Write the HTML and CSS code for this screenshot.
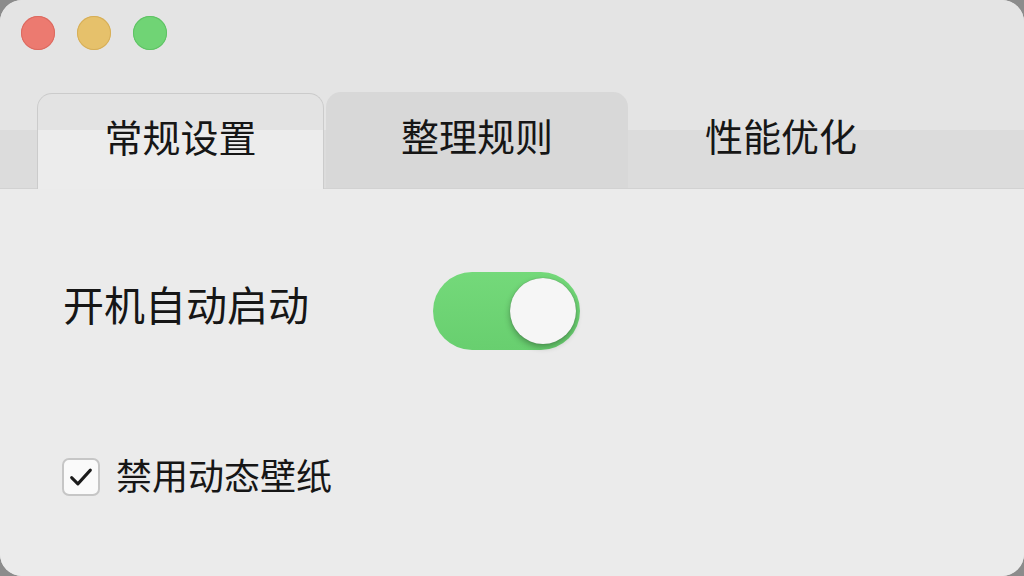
FILE: index.html
```html
<!DOCTYPE html>
<html lang="zh-CN">
<head>
  <meta charset="UTF-8" />
  <title>偏好设置</title>
  <link rel="stylesheet" href="styles.css">
</head>
<body>

<div class="window">
  <div class="titlebar">
    <span class="light red"></span>
    <span class="light yellow"></span>
    <span class="light green"></span>
  </div>

  <div class="tabbar" role="tablist">
    <div class="tab active" role="tab" aria-selected="true">常规设置</div>
    <div class="tab inactive" role="tab" aria-selected="false">整理规则</div>
    <div class="tab plain" role="tab" aria-selected="false">性能优化</div>
  </div>

  <div class="content">
    <div class="row">
      <span class="label">开机自动启动</span>
      <div class="switch" role="switch" aria-checked="true"><span class="knob"></span></div>
    </div>

    <label class="check-row">
      <span class="checkbox">
        <svg viewBox="0 0 24 24" width="30" height="30"><path d="M4.5 12.5l5 5L19.5 6.5" fill="none" stroke="#1a1a1a" stroke-width="2.4" stroke-linecap="round" stroke-linejoin="round"/></svg>
      </span>
      <span class="check-label">禁用动态壁纸</span>
    </label>
  </div>
</div>

</body>
</html>
```

FILE: styles.css
```css
body {
  margin: 0;
  background: #8c8c8c;
  font-family: "Noto Sans CJK SC", "Noto Sans", sans-serif;
  color: #161616;
}
.window {
  height: 576px;
  border-radius: 22px;
  overflow: hidden;
  background: #ebebeb;
  display: flex;
  flex-direction: column;
}
.titlebar {
  height: 93px;
  box-sizing: border-box;
  padding: 16px 0 0 21px;
  display: flex;
  gap: 22px;
  background: #e4e4e4;
}
.light {
  width: 34px;
  height: 34px;
  border-radius: 50%;
}
.red { background: #ec7a70; box-shadow: inset 0 0 0 1px #dc6a60; }
.yellow { background: #e6c16b; box-shadow: inset 0 0 0 1px #d6ae58; }
.green { background: #70d475; box-shadow: inset 0 0 0 1px #5fc265; }

.tabbar {
  height: 95px;
  display: flex;
  align-items: flex-end;
  padding-left: 37px;
  background: linear-gradient(#e4e4e4 0, #e4e4e4 37px, #dcdcdc 37px);
  border-bottom: 1px solid #d2d2d2;
}
.tab {
  height: 95px;
  box-sizing: border-box;
  display: flex;
  align-items: center;
  justify-content: center;
  font-size: 38px;
  padding-bottom: 12px;
}
.active {
  width: 287px;
  background: linear-gradient(#e3e3e3 0, #e3e3e3 36px, #ececec 36px);
  border: 1px solid #cbcbcb;
  border-bottom: none;
  border-radius: 15px 15px 0 0;
  margin-bottom: -1px;
  height: 96px;
}
.inactive {
  width: 302px;
  margin-left: 2px;
  background: #d8d8d8;
  border-radius: 15px 15px 0 0;
  height: 96px;
}
.plain {
  width: 306px;
}

.content {
  flex: 1;
  padding: 83px 0 0 63px;
  background: #ebebeb;
}
.row {
  display: flex;
  align-items: center;
}
.label {
  width: 370px;
  font-size: 41px;
  padding-bottom: 16px;
}
.switch {
  position: relative;
  width: 147px;
  height: 78px;
  border-radius: 39px;
  background: linear-gradient(#74d97a, #68cf6f);
}
.knob {
  position: absolute;
  top: 6px;
  right: 4px;
  width: 66px;
  height: 66px;
  border-radius: 50%;
  background: #f6f6f6;
  box-shadow: 0 3px 6px rgba(0, 0, 0, 0.3), 0 0 1px rgba(0, 0, 0, 0.3);
}
.check-row {
  display: flex;
  align-items: center;
  gap: 16px;
  margin-top: 98px;
  margin-left: -1px;
}
.checkbox {
  width: 38px;
  height: 38px;
  box-sizing: border-box;
  border: 2px solid #c6c6c6;
  border-radius: 7px;
  background: #fafafa;
  display: flex;
  align-items: center;
  justify-content: center;
}
.check-label {
  font-size: 36px;
  padding-bottom: 6px;
}
```
